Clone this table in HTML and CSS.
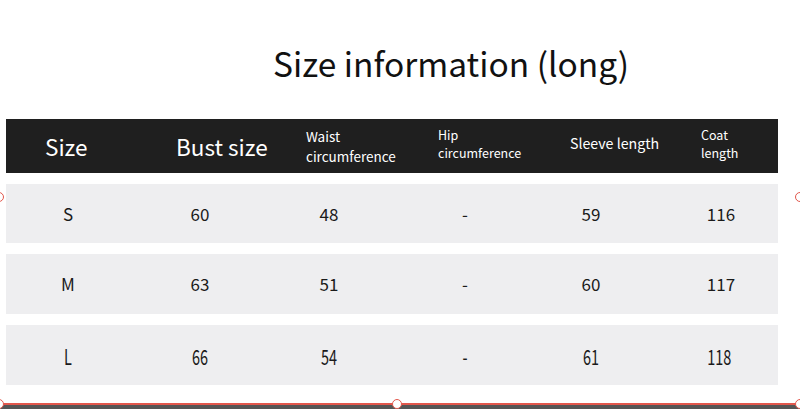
FILE: index.html
```html
<!DOCTYPE html>
<html>
<head>
<meta charset="utf-8">
<link rel="stylesheet" href="styles.css">
</head>
<body>
<div class="page">
  <h1 class="title">Size information (long)</h1>
  <div class="table">
    <div class="row head">
      <div class="c c1"><span class="big">Size</span></div>
      <div class="c c2"><span class="big">Bust size</span></div>
      <div class="c c3"><span class="small">Waist<br>circumference</span></div>
      <div class="c c4"><span class="tiny">Hip<br>circumference</span></div>
      <div class="c c5"><span class="mid">Sleeve length</span></div>
      <div class="c c6"><span class="tiny">Coat<br>length</span></div>
    </div>
    <div class="row data">
      <div class="d">S</div><div class="d">60</div><div class="d">48</div><div class="d">-</div><div class="d">59</div><div class="d d6">116</div>
    </div>
    <div class="row data">
      <div class="d">M</div><div class="d">63</div><div class="d">51</div><div class="d">-</div><div class="d">60</div><div class="d d6">117</div>
    </div>
    <div class="row data tall">
      <div class="d">L</div><div class="d">66</div><div class="d">54</div><div class="d">-</div><div class="d">61</div><div class="d d6">118</div>
    </div>
  </div>
  <div class="rule"></div>
  <span class="handle h-bl"></span>
  <span class="handle h-bm"></span>
  <span class="handle h-br"></span>
  <span class="handle h-ml"></span>
  <span class="handle h-mr"></span>
</div>
</body>
</html>
```
FILE: styles.css
```css
* { box-sizing: border-box; }
html, body { margin: 0; padding: 0; background: #fff; }
body { font-family: "Noto Sans CJK SC", "Noto Sans", sans-serif; color: #1a1a1a; }
.page { position: relative; width: 800px; height: 409px; overflow: hidden; }
.title {
  margin: 0;
  height: 119px;
  padding: 38px 0 0 102px;
  text-align: center;
  font-size: 33.5px;
  font-weight: 400;
  line-height: 50px;
  color: #111;
}
.table { margin-left: 6px; width: 772px; display: flex; flex-direction: column; gap: 11px; }
.row { display: grid; grid-template-columns: 124px 140px 118px 154px 98px 138px; align-items: center; }
.head { background: #1f1f1f; color: #fff; height: 54px; }
.c { white-space: nowrap; }
.c1 { padding-left: 39px; }
.c2 { padding-left: 46px; }
.c3 { padding-left: 36px; }
.c4 { padding-left: 50px; }
.c5 { padding-left: 28px; }
.c6 { padding-left: 61px; }
.big { font-size: 22.5px; line-height: 30px; display: block; }
.small { font-size: 13.5px; line-height: 20px; display: block; }
.tiny { font-size: 12.5px; line-height: 18px; display: block; margin-top: -5px; }
.mid { font-size: 14.2px; line-height: 20px; display: block; margin-top: -6px; }
.data { background: #eeeef0; height: 59px; font-size: 17px; }
.data + .data { height: 60px; }
.d { text-align: center; line-height: 22px; }
.d6 { padding-left: 24px; }
.tall .d { transform: scale(0.85, 1.25); padding-top: 2px; }
.rule { position: absolute; left: 0; right: 0; top: 403px; height: 6px; background: #555; border-top: 2px solid #e2574c; }
.handle { position: absolute; width: 10px; height: 10px; border: 1.5px solid #e2574c; background: #fff; border-radius: 50%; }
.h-bl { left: -6px; top: 399px; }
.h-bm { left: 392px; top: 399px; }
.h-br { left: 795px; top: 399px; }
.h-ml { left: -6px; top: 192px; }
.h-mr { left: 795px; top: 192px; }
```
